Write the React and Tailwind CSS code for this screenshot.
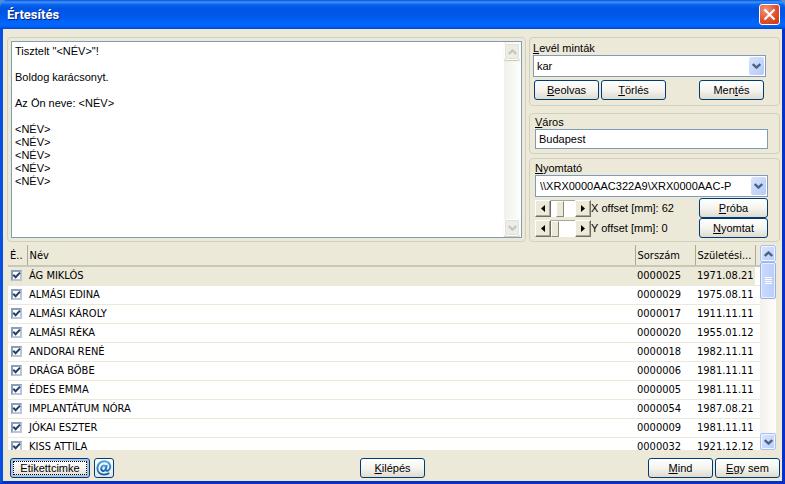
// App.jsx - "Értesítés" dialog: letter editor, printer settings and recipient list
import React, { useState } from 'react';

const people = [
  { name: 'ÁG MIKLÓS', id: '0000025', born: '1971.08.21' },
  { name: 'ALMÁSI EDINA', id: '0000029', born: '1975.08.11' },
  { name: 'ALMÁSI KÁROLY', id: '0000017', born: '1911.11.11' },
  { name: 'ALMÁSI RÉKA', id: '0000020', born: '1955.01.12' },
  { name: 'ANDORAI RENÉ', id: '0000018', born: '1982.11.11' },
  { name: 'DRÁGA BÖBE', id: '0000006', born: '1981.11.11' },
  { name: 'ÉDES EMMA', id: '0000005', born: '1981.11.11' },
  { name: 'IMPLANTÁTUM NÓRA', id: '0000054', born: '1987.08.21' },
  { name: 'JÓKAI ESZTER', id: '0000009', born: '1981.11.11' },
  { name: 'KISS ATTILA', id: '0000032', born: '1921.12.12' },
];

const letter = `Tisztelt "<NÉV>"!

Boldog karácsonyt.

Az Ön neve: <NÉV>

<NÉV>
<NÉV>
<NÉV>
<NÉV>
<NÉV>`;

function Chevron({ up = false, className = 'text-[#4d6185]' }) {
  return (
    <svg className={`w-[9px] h-[6px] ${className}`} viewBox="0 0 9 6" fill="none" stroke="currentColor" strokeWidth="2.4">
      <path d={up ? 'M0.8 5 4.5 1.5 8.2 5' : 'M0.8 1 4.5 4.5 8.2 1'} />
    </svg>
  );
}

function PushButton({ children, className = 'w-[65px]' }) {
  return (
    <button
      type="button"
      className={`h-5 shrink-0 flex items-center justify-center rounded-[3px] border border-[#003c74] bg-gradient-to-b from-white via-[#f5f4ee] to-[#dfdbcf] leading-3 whitespace-nowrap ${className}`}
    >
      {children}
    </button>
  );
}

function Group({ children, className = '' }) {
  return <div className={`rounded-[4px] border border-[#d0d0bf] ${className}`}>{children}</div>;
}

function SelectBox({ id, options, padding = 'pl-1' }) {
  return (
    <div className="relative h-[22px] border border-[#7f9db9] bg-white">
      <select id={id} className={`w-full h-5 appearance-none bg-transparent pr-5 outline-none ${padding}`}>
        {options.map((option) => (
          <option key={option}>{option}</option>
        ))}
      </select>
      <span className="pointer-events-none absolute right-px top-px bottom-px w-[15px] flex items-center justify-center rounded-[2px] bg-gradient-to-br from-[#dbe5fc] to-[#b3c9f8]">
        <Chevron />
      </span>
    </div>
  );
}

function ScrollButton({ up = false, disabled = false, label }) {
  return (
    <button
      type="button"
      aria-label={label}
      disabled={disabled}
      className={
        disabled
          ? 'w-4 h-[17px] shrink-0 flex items-center justify-center rounded-[2px] border border-white bg-[#eeede5] shadow-[inset_0_0_0_1px_#e3e1d6,0_1px_1px_#c9c7ba]'
          : 'w-4 h-[17px] shrink-0 flex items-center justify-center rounded-[2px] border border-[#a9bff0] bg-gradient-to-br from-[#dce6fd] to-[#b6cbfa] shadow-[inset_0_0_0_1px_#f2f6ff]'
      }
    >
      <Chevron up={up} className={disabled ? 'text-[#c9c7ba]' : 'text-[#4d6185]'} />
    </button>
  );
}

const stepClass =
  'w-4 h-[17px] flex items-center justify-center bg-[#ece9d8] border border-t-white border-l-white border-r-[#716f64] border-b-[#716f64] shadow-[inset_-1px_-1px_0_#aca899]';

function OffsetSlider({ axis, start }) {
  const [value, setValue] = useState(start);
  const id = `offset-${axis}`;

  return (
    <div className="flex items-center">
      <button type="button" aria-label={`${axis} -`} className={stepClass} onClick={() => setValue(Math.max(0, value - 1))}>
        <svg className="w-1 h-[7px]" viewBox="0 0 4 7"><path d="M4 0v7L0 3.5z" /></svg>
      </button>
      <input
        id={id}
        type="range"
        min="0"
        max="200"
        value={value}
        onChange={(e) => setValue(Number(e.target.value))}
        className="w-6 h-[17px] appearance-none bg-white border-t border-[#aca899] outline-none [&::-webkit-slider-thumb]:appearance-none [&::-webkit-slider-thumb]:w-2 [&::-webkit-slider-thumb]:h-4 [&::-webkit-slider-thumb]:bg-[#ece9d8] [&::-webkit-slider-thumb]:border [&::-webkit-slider-thumb]:border-t-white [&::-webkit-slider-thumb]:border-l-white [&::-webkit-slider-thumb]:border-r-[#8c897c] [&::-webkit-slider-thumb]:border-b-[#8c897c]"
      />
      <button type="button" aria-label={`${axis} +`} className={stepClass} onClick={() => setValue(Math.min(200, value + 1))}>
        <svg className="w-1 h-[7px]" viewBox="0 0 4 7"><path d="M0 0v7l4-3.5z" /></svg>
      </button>
      <label htmlFor={id} className="whitespace-nowrap">{axis} offset [mm]: {value}</label>
    </div>
  );
}

function CheckBox({ label }) {
  return (
    <span className="relative block w-[11px] h-[11px]">
      <input
        type="checkbox"
        defaultChecked
        aria-label={label}
        className="peer block w-[11px] h-[11px] appearance-none border-2 border-t-[#8a9fc0] border-l-[#8a9fc0] border-r-[#b9c6da] border-b-[#b9c6da] bg-white"
      />
      <svg className="pointer-events-none absolute inset-0 hidden peer-checked:block" viewBox="0 0 11 11" fill="none" stroke="#26415f" strokeWidth="2">
        <path d="M2.3 4.8 4.6 7.2 9 2.6" />
      </svg>
    </span>
  );
}

const headClass =
  'h-[21px] pl-[2px] text-left font-normal border-r border-[#aca899] bg-clip-padding whitespace-nowrap';

export default function App() {
  const [text, setText] = useState(letter);

  return (
    <div className="h-screen flex flex-col bg-[#4e8fd8] font-['Liberation_Sans',Arial,sans-serif] text-[11px] leading-[13px] text-black">
      {/* Title bar */}
      <header className="h-[29px] shrink-0 flex items-center justify-between rounded-t-[7px] pl-[7px] pr-[5px] bg-[linear-gradient(to_bottom,#0a4fd0_0%,#3d92ff_7%,#0a63ee_16%,#0054e3_30%,#0058ea_55%,#0267fd_82%,#0164fa_90%,#0148cf_100%)]">
        <h1 className="font-['Roboto','Noto_Sans',sans-serif] text-[13px] leading-4 font-bold text-white [text-shadow:1px_1px_0_#0a1f80]">Értesítés</h1>
        <button
          type="button"
          aria-label="Bezárás"
          className="w-[21px] h-[21px] flex items-center justify-center rounded-[3px] border border-white bg-[radial-gradient(circle_at_30%_25%,#f0967b,#e0502c_55%,#c13a12)]"
        >
          <svg className="w-[13px] h-[13px]" viewBox="0 0 13 13" fill="none" stroke="#fff" strokeWidth="2.2">
            <path d="M1.5 1.5l10 10M11.5 1.5l-10 10" />
          </svg>
        </button>
      </header>

      <main className="flex-1 min-h-0 flex flex-col bg-[#ece9d8] border-x-[3px] border-b-[3px] border-l-[#0850e0] border-r-[#0831c9] border-b-[#0631c4] pt-2">
        <div className="shrink-0 flex gap-[3px] pl-1 pr-[2px]">
          {/* Letter text */}
          <Group className="flex-1 min-w-0 flex p-[3px]">
            <div className="flex-1 min-w-0 flex border border-[#7f9db9] bg-white pr-px">
              <textarea
                aria-label="Levél"
                value={text}
                onChange={(e) => setText(e.target.value)}
                className="flex-1 min-w-0 resize-none overflow-hidden pl-[3px] pt-[3px] outline-none"
              />
              <div className="w-4 flex flex-col justify-between py-px bg-gradient-to-r from-[#f1f0e9] to-[#fdfdfb]">
                <ScrollButton up disabled label="Fel" />
                <ScrollButton disabled label="Le" />
              </div>
            </div>
          </Group>

          {/* Settings */}
          <div className="w-[251px] shrink-0 flex flex-col gap-1">
            <Group className="pl-[3px] pr-[13px] pt-1 pb-[5px]">
              <label htmlFor="template" className="block"><u>L</u>evél minták</label>
              <SelectBox id="template" options={['kar']} padding="pl-[3px]" />
              <div className="flex gap-[2px] pt-[3px] pl-px pr-[2px]">
                <PushButton><u>B</u>eolvas</PushButton>
                <PushButton><u>T</u>örlés</PushButton>
                <PushButton className="w-[65px] ml-auto">Men<u>t</u>és</PushButton>
              </div>
            </Group>

            <Group className="pl-[5px] pr-[11px] pt-[2px] pb-1 mt-[3px]">
              <label htmlFor="city" className="block"><u>V</u>áros</label>
              <input id="city" type="text" defaultValue="Budapest" className="block w-full h-5 pl-[3px] border border-[#7f9db9] bg-white outline-none" />
            </Group>

            <Group className="pl-[5px] pr-[11px] pt-[3px] pb-[3px]">
              <label htmlFor="printer" className="block"><u>N</u>yomtató</label>
              <SelectBox id="printer" options={['\\\\XRX0000AAC322A9\\XRX0000AAC-P']} />
              <div className="flex items-center justify-between pt-px">
                <OffsetSlider axis="X" start={62} />
                <PushButton className="w-[69px]"><u>P</u>róba</PushButton>
              </div>
              <div className="flex items-center justify-between">
                <OffsetSlider axis="Y" start={0} />
                <PushButton className="w-[69px]"><u>N</u>yomtat</PushButton>
              </div>
            </Group>
          </div>
        </div>

        {/* Recipients */}
        <div className="flex-1 min-h-0 flex overflow-hidden mt-[3px] pl-[5px] pr-[6px] font-['DejaVu_Sans_Condensed','Liberation_Sans',sans-serif]">
          <div className="flex-1 min-w-0 overflow-hidden bg-white">
            <table className="w-full table-fixed border-collapse">
              <colgroup>
                <col className="w-[19px]" />
                <col />
                <col className="w-[60px]" />
                <col className="w-[60px]" />
                <col className="w-[5px]" />
              </colgroup>
              <thead className="bg-[#ece9d8] border-b-2 border-[#cbc7b8]">
                <tr>
                  <th className={headClass}>É..</th>
                  <th className={headClass}>Név</th>
                  <th className={headClass}>Sorszám</th>
                  <th className={headClass}>Születési...</th>
                  <td />
                </tr>
              </thead>
              <tbody>
                {people.map((person, i) => (
                  <tr key={person.id} className="h-[19px] border-b border-[#ece9d8]">
                    <td className={i === 0 ? 'pl-[3px] bg-[#ece9d8]' : 'pl-[3px]'}><CheckBox label={person.name} /></td>
                    <td className={i === 0 ? 'pl-[2px] bg-[#ece9d8]' : 'pl-[2px]'}>{person.name}</td>
                    <td className={i === 0 ? 'pl-[2px] bg-[#ece9d8]' : 'pl-[2px]'}>{person.id}</td>
                    <td className={i === 0 ? 'pl-[2px] bg-[#ece9d8]' : 'pl-[2px]'}>{person.born}</td>
                    <td />
                  </tr>
                ))}
              </tbody>
            </table>
          </div>
          <div className="w-4 shrink-0 flex flex-col bg-gradient-to-r from-[#f3f1ec] to-[#fefefb]">
            <ScrollButton up label="Lista fel" />
            <div className="h-[37px] flex flex-col items-center justify-center gap-px rounded-[2px] border border-[#98b1e4] bg-gradient-to-r from-[#cbdafd] to-[#b9cdfb] shadow-[inset_0_0_0_1px_#e8f0ff]">
              <i className="w-[7px] h-px bg-white" />
              <i className="w-[7px] h-px bg-white" />
              <i className="w-[7px] h-px bg-white" />
              <i className="w-[7px] h-px bg-white" />
            </div>
            <div className="flex-1" />
            <ScrollButton label="Lista le" />
          </div>
        </div>

        {/* Actions */}
        <footer className="shrink-0 grid grid-cols-[1fr_auto_1fr] items-center pt-2 pb-[3px] px-[2px]">
          <div className="flex gap-1 pl-[5px]">
            <PushButton className="w-20 shadow-[inset_0_0_0_2px_#a9c2ee] [&>span]:border [&>span]:border-dotted [&>span]:border-black">
              <span className="w-[74px] h-[14px]">Etikettcimke</span>
            </PushButton>
            <button
              type="button"
              aria-label="E-mail"
              className="w-5 h-5 flex items-center justify-center rounded-[3px] border border-[#003c74] bg-gradient-to-b from-white to-[#dfe6ea]"
            >
              <svg className="w-4 h-4" viewBox="0 0 16 16" fill="none" stroke="url(#at)">
                <defs>
                  <linearGradient id="at" x1="0" y1="0" x2="0" y2="1">
                    <stop offset="0" stopColor="#4aa3e6" />
                    <stop offset="1" stopColor="#0e5ca8" />
                  </linearGradient>
                </defs>
                <ellipse cx="7.6" cy="8.2" rx="2.2" ry="2.8" strokeWidth="1.9" transform="rotate(20 7.6 8.2)" />
                <path d="M10.9 5 9.8 9.4c-.3 1.6 1.2 1.9 2.5 1 1.3-.9 2-2.3 2-3.7C14.3 3.5 11.7 1.3 8.3 1.3 4.3 1.3 1.4 4.3 1.4 8.2c0 3.8 2.7 6.4 6.6 6.4 2 0 3.9-.6 5.2-1.6" strokeWidth="1.9" />
              </svg>
            </button>
          </div>
          <PushButton><u>K</u>ilépés</PushButton>
          <div className="flex justify-end gap-[2px]">
            <PushButton><u>M</u>ind</PushButton>
            <PushButton><u>E</u>gy sem</PushButton>
          </div>
        </footer>
      </main>
    </div>
  );
}
